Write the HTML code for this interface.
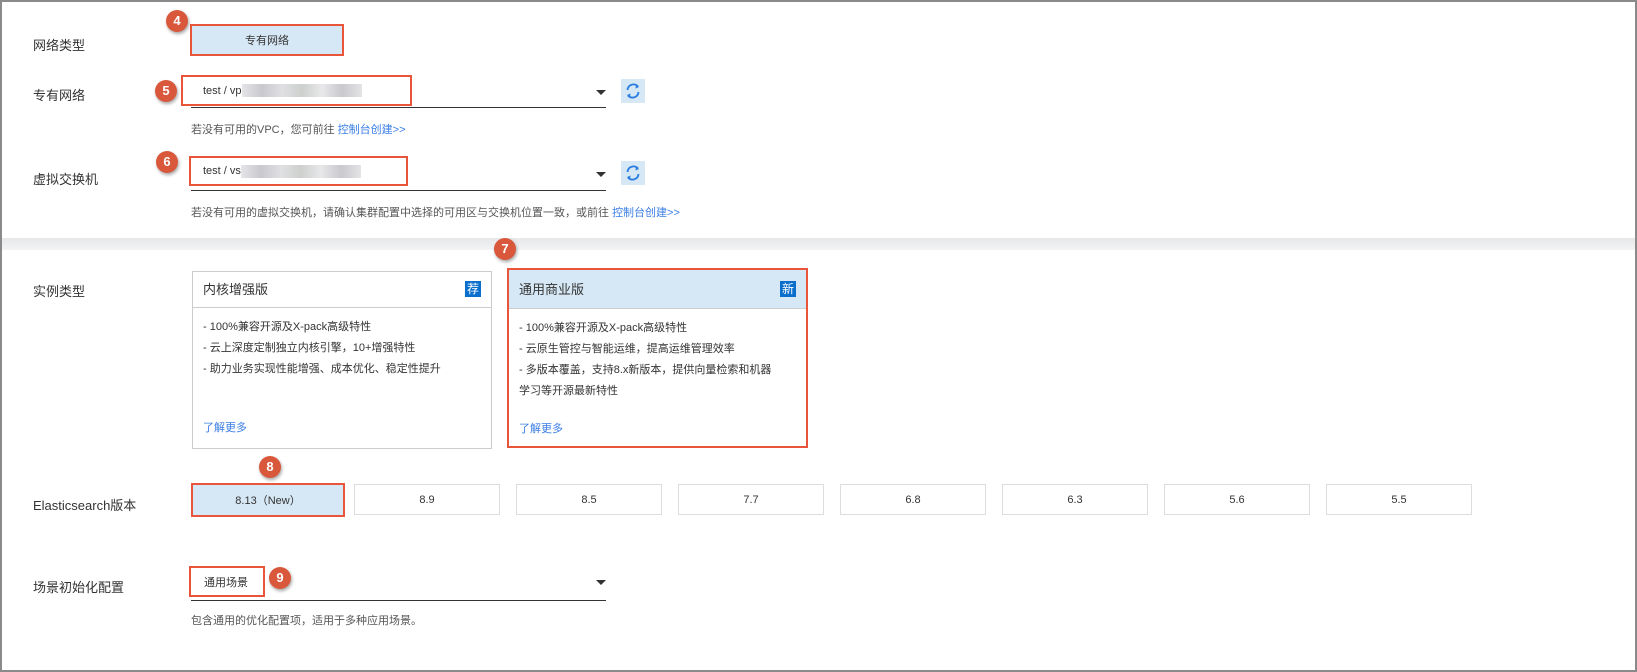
<!DOCTYPE html>
<html><head><meta charset="utf-8"><style>
*{margin:0;padding:0;box-sizing:border-box}
body{width:1637px;height:672px;position:relative;background:#fff;font-family:"Liberation Sans","Noto Sans CJK SC",sans-serif;color:#333;overflow:hidden}
.frame{position:absolute;left:0;top:0;width:1637px;height:672px;border:2px solid #8a8a8a}
.a{position:absolute}
.lbl{position:absolute;left:33px;font-size:13px;color:#333}
.badge{position:absolute;width:22px;height:22px;border-radius:50%;background:#d9573b;color:#fff;font-weight:bold;font-size:13px;text-align:center;line-height:22px;box-shadow:1px 2px 3px rgba(0,0,0,.35)}
.red{position:absolute;border:2.5px solid #e8553a;display:flex;align-items:center}
.ul{position:absolute;height:1px;background:#333}
.arr{position:absolute;width:0;height:0;border-left:5px solid transparent;border-right:5px solid transparent;border-top:5px solid #333}
.ref{position:absolute;width:24px;height:24px;background:#d6e8f5}
.help{position:absolute;font-size:11px;color:#555;left:191px}
.help b{font-weight:normal;color:#3a7ee6}
.blur{display:inline-block;width:120px;height:13px;vertical-align:middle;background:linear-gradient(90deg,#e5e5e8,#c8c8ce,#e0e0e3,#cdd0cd,#e8e8ea,#c9c9ce,#e4e4e6)}
.card{position:absolute;border:1px solid #ccc;font-size:11px;color:#333}
.card .h{height:36px;border-bottom:1px solid #ccc;padding-left:10px;line-height:36px;font-size:13px;position:relative}
.card .tag{position:absolute;right:10px;top:9px;width:16px;height:16px;background:#0a6ecd;color:#fff;font-size:12px;line-height:16px;text-align:center}
.card .l{position:absolute;left:10px}
.ver{position:absolute;top:484px;width:146px;height:31px;border:1px solid #ddd;font-size:11px;display:flex;align-items:center;justify-content:center;color:#333}
</style></head><body>
<div class="a" style="left:0;top:238px;width:1637px;height:12px;background:linear-gradient(#e6e7e9,#f3f4f5)"></div>
<div class="frame"></div>

<div class="lbl" style="top:35px">网络类型</div>
<div class="red" style="left:190px;top:24px;width:154px;height:32px;background:#d6e8f5;font-size:11px;justify-content:center">专有网络</div>
<div class="badge" style="left:166px;top:10px">4</div>

<div class="lbl" style="top:85px">专有网络</div>
<div class="ul" style="left:191px;top:107px;width:415px"></div>
<div class="red" style="left:181px;top:75px;width:231px;height:31px;font-size:11px;padding-left:20px">test / vp<span class="blur"></span></div>
<div class="badge" style="left:155px;top:80px">5</div>
<div class="arr" style="left:596px;top:90px"></div>
<div class="ref" style="left:621px;top:79px"><svg width="24" height="24" viewBox="0 0 24 24"><path d="M6.5 11a6 6 0 0 1 10.5-3.5" fill="none" stroke="#2a7de0" stroke-width="1.8"/><path d="M15 5.5l3 2.5-3.5 1.5z" fill="#2a7de0"/><path d="M17.5 13a6 6 0 0 1-10.5 3.5" fill="none" stroke="#2a7de0" stroke-width="1.8"/><path d="M9 18.5l-3-2.5 3.5-1.5z" fill="#2a7de0"/></svg></div>
<div class="help" style="top:121px">若没有可用的VPC，您可前往 <b>控制台创建&gt;&gt;</b></div>

<div class="lbl" style="top:169px">虚拟交换机</div>
<div class="ul" style="left:191px;top:190px;width:415px"></div>
<div class="red" style="left:189px;top:156px;width:219px;height:30px;font-size:11px;padding-left:12px">test / vs<span class="blur"></span></div>
<div class="badge" style="left:156px;top:151px">6</div>
<div class="arr" style="left:596px;top:172px"></div>
<div class="ref" style="left:621px;top:161px"><svg width="24" height="24" viewBox="0 0 24 24"><path d="M6.5 11a6 6 0 0 1 10.5-3.5" fill="none" stroke="#2a7de0" stroke-width="1.8"/><path d="M15 5.5l3 2.5-3.5 1.5z" fill="#2a7de0"/><path d="M17.5 13a6 6 0 0 1-10.5 3.5" fill="none" stroke="#2a7de0" stroke-width="1.8"/><path d="M9 18.5l-3-2.5 3.5-1.5z" fill="#2a7de0"/></svg></div>
<div class="help" style="top:204px">若没有可用的虚拟交换机，请确认集群配置中选择的可用区与交换机位置一致，或前往 <b>控制台创建&gt;&gt;</b></div>

<div class="badge" style="left:494px;top:238px">7</div>
<div class="lbl" style="top:281px">实例类型</div>
<div class="card" style="left:192px;top:271px;width:300px;height:178px">
<div class="h">内核增强版<div class="tag">荐</div></div>
<div class="l" style="top:46px">- 100%兼容开源及X-pack高级特性</div>
<div class="l" style="top:67px">- 云上深度定制独立内核引擎，10+增强特性</div>
<div class="l" style="top:88px">- 助力业务实现性能增强、成本优化、稳定性提升</div>
<div class="l" style="top:147px;color:#3a7ee6">了解更多</div>
</div>
<div class="card" style="left:507px;top:268px;width:301px;height:180px;border:2.5px solid #e8553a">
<div class="h" style="background:#d6e8f5;height:39px;line-height:39px">通用商业版<div class="tag" style="top:11px">新</div></div>
<div class="l" style="top:49px">- 100%兼容开源及X-pack高级特性</div>
<div class="l" style="top:70px">- 云原生管控与智能运维，提高运维管理效率</div>
<div class="l" style="top:91px">- 多版本覆盖，支持8.x新版本，提供向量检索和机器</div>
<div class="l" style="top:112px">学习等开源最新特性</div>
<div class="l" style="top:150px;color:#3a7ee6">了解更多</div>
</div>

<div class="badge" style="left:259px;top:456px">8</div>
<div class="lbl" style="top:495px">Elasticsearch版本</div>
<div class="ver" style="left:191px;width:154px;top:483px;height:34px;border:2.5px solid #e8553a;background:#d6e8f5">8.13（New）</div>
<div class="ver" style="left:354px">8.9</div>
<div class="ver" style="left:516px">8.5</div>
<div class="ver" style="left:678px">7.7</div>
<div class="ver" style="left:840px">6.8</div>
<div class="ver" style="left:1002px">6.3</div>
<div class="ver" style="left:1164px">5.6</div>
<div class="ver" style="left:1326px">5.5</div>

<div class="lbl" style="top:577px">场景初始化配置</div>
<div class="ul" style="left:191px;top:600px;width:415px"></div>
<div class="red" style="left:189px;top:566px;width:76px;height:31px;font-size:11px;padding-left:13px">通用场景</div>
<div class="badge" style="left:269px;top:567px">9</div>
<div class="arr" style="left:596px;top:580px"></div>
<div class="help" style="top:612px">包含通用的优化配置项，适用于多种应用场景。</div>
</body></html>
